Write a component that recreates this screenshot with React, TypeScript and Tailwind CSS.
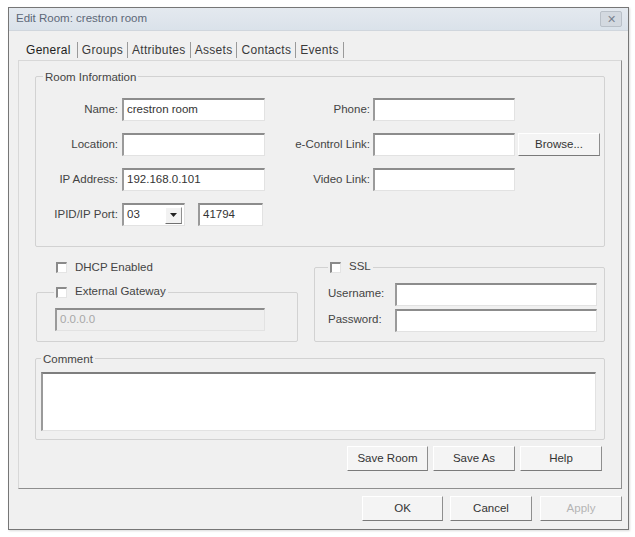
import React from 'react';

const font = { fontFamily: '"Liberation Sans", Arial, sans-serif' };

function Field({ width, value = '', disabled = false }: { width: string; value?: string; disabled?: boolean }) {
  return (
    <div
      className={`${width} h-[23px] flex items-center px-[3px] border-t-2 border-l-2 border-r border-b border-t-[#8c8c8c] border-l-[#9a9a9a] border-r-[#e2e2e2] border-b-[#e2e2e2] ${
        disabled ? 'bg-[#efefef] text-[#a8a8a8]' : 'bg-white text-[#333]'
      }`}
    >
      {value}
    </div>
  );
}

function Check() {
  return <span className="inline-block w-[11px] h-[11px] bg-white border-t-2 border-l-2 border-r border-b border-t-[#8a8a8a] border-l-[#8a8a8a] border-r-[#e4e4e4] border-b-[#e4e4e4]" />;
}

function Btn({ label, width, disabled = false, h = 'h-[25px]' }: { label: string; width: string; disabled?: boolean; h?: string }) {
  return (
    <div
      className={`${width} ${h} flex items-center justify-center bg-[#f4f4f4] border border-t-white border-l-white border-r-[#8e8e8e] border-b-[#7a7a7a] ${
        disabled ? 'text-[#b4b4b4]' : 'text-[#333]'
      }`}
    >
      {label}
    </div>
  );
}

export default function App() {
  const tabs = ['General', 'Groups', 'Attributes', 'Assets', 'Contacts', 'Events'];

  return (
    <div className="w-[635px] h-[537px] bg-white pt-[7px] pl-[8px] text-[11.5px] text-[#444]" style={font}>
      <div className="w-[621px] h-[523px] bg-[#f0f0f0] border border-[#767676] flex flex-col shadow-[1px_1px_2px_rgba(0,0,0,0.15)]">
        {/* title bar */}
        <div className="h-[23px] flex items-center justify-between pl-[7px] pr-[6px] bg-gradient-to-b from-[#e4e9ef] to-[#dae2ea] border-b border-[#d0d6dd]">
          <span className="text-[#5d6878] text-[11.5px]">Edit Room: crestron room</span>
          <div className="w-[22px] h-[16px] flex items-center justify-center bg-[#d3d9e0] border border-[#b9c0c8] rounded-[2px] text-[#7a8390] text-[11px] leading-none">
            ✕
          </div>
        </div>

        {/* tabs */}
        <div className="h-[29px] flex items-center pt-[9px] pl-[16px] text-[#3a3a3a] text-[12px] tracking-[0.3px]">
          {tabs.map((t, i) => (
            <div key={t} className="flex items-center">
              <span className={i === 0 ? 'text-[#1e1e1e] pl-[1px] pr-[6px]' : 'px-[4px]'}>{t}</span>
              <span className="inline-block w-px h-[16px] bg-[#9a9a9a]" />
            </div>
          ))}
        </div>

        {/* tab panel */}
        <div className="ml-[9px] w-[604px] h-[429px] border border-[#d8d8d8] border-r-[#8e8e8e] border-b-[#8e8e8e] flex flex-col">
          {/* Room information */}
          <div className="relative ml-[16px] mt-[15px] w-[570px] h-[171px] border border-[#d2d2d2] rounded-[2px] pt-[21px] flex flex-col gap-[12px]">
            <span className="absolute -top-[8px] left-[7px] px-[2px] bg-[#f0f0f0]">Room Information</span>

            <div className="flex items-center h-[23px]">
              <span className="w-[82px] text-right">Name:</span>
              <div className="ml-[4px]"><Field width="w-[143px]" value="crestron room" /></div>
              <span className="w-[105px] text-right">Phone:</span>
              <div className="ml-[3px]"><Field width="w-[142px]" /></div>
            </div>

            <div className="flex items-center h-[23px]">
              <span className="w-[82px] text-right">Location:</span>
              <div className="ml-[4px]"><Field width="w-[143px]" /></div>
              <span className="w-[105px] text-right">e-Control Link:</span>
              <div className="ml-[3px]"><Field width="w-[142px]" /></div>
              <div className="ml-[3px]"><Btn label="Browse..." width="w-[82px]" h="h-[23px]" /></div>
            </div>

            <div className="flex items-center h-[23px]">
              <span className="w-[82px] text-right">IP Address:</span>
              <div className="ml-[4px]"><Field width="w-[143px]" value="192.168.0.101" /></div>
              <span className="w-[105px] text-right">Video Link:</span>
              <div className="ml-[3px]"><Field width="w-[142px]" /></div>
            </div>

            <div className="flex items-center h-[23px]">
              <span className="w-[82px] text-right">IPID/IP Port:</span>
              <div className="ml-[4px] w-[63px] h-[23px] flex items-center justify-between pl-[3px] pr-[2px] bg-white border-t-2 border-l-2 border-r border-b border-t-[#8c8c8c] border-l-[#9a9a9a] border-r-[#e2e2e2] border-b-[#e2e2e2] text-[#333]">
                <span>03</span>
                <span className="w-[17px] h-[17px] flex items-center justify-center bg-[#f2f2f2] border border-t-white border-l-white border-r-[#909090] border-b-[#707070]">
                  <svg width="7" height="4" viewBox="0 0 7 4"><path d="M0 0h7L3.5 4z" fill="#222" /></svg>
                </span>
              </div>
              <div className="ml-[13px]"><Field width="w-[65px]" value="41794" /></div>
            </div>
          </div>

          {/* lower options */}
          <div className="flex ml-[16px]">
            <div className="w-[263px] flex flex-col">
              <div className="mt-[14px] h-[13px] flex items-center pl-[21px] gap-[8px]">
                <Check />
                <span>DHCP Enabled</span>
              </div>
              <div className="relative mt-[18px] ml-[1px] w-[262px] h-[50px] border border-[#d2d2d2] rounded-[2px] pt-[15px] pl-[18px]">
                <span className="absolute -top-[8px] left-[17px] px-[2px] bg-[#f0f0f0] flex items-center gap-[8px] h-[14px]">
                  <Check />
                  <span>External Gateway</span>
                </span>
                <Field width="w-[210px]" value="0.0.0.0" disabled />
              </div>
            </div>

            <div className="relative ml-[16px] mt-[20px] w-[291px] h-[75px] border border-[#d2d2d2] rounded-[2px] pt-[15px] pl-[13px] flex flex-col gap-[4px]">
              <span className="absolute -top-[8px] left-[13px] px-[2px] bg-[#f0f0f0] flex items-center gap-[8px] h-[14px]">
                <Check />
                <span>SSL</span>
              </span>
              <div className="flex items-center h-[22px]">
                <span className="w-[67px]">Username:</span>
                <Field width="w-[202px]" />
              </div>
              <div className="flex items-center h-[22px]">
                <span className="w-[67px]">Password:</span>
                <Field width="w-[202px]" />
              </div>
            </div>
          </div>

          {/* Comment */}
          <div className="relative ml-[16px] mt-[16px] w-[570px] h-[82px] border border-[#d2d2d2] rounded-[2px] pt-[13px] pl-[5px]">
            <span className="absolute -top-[8px] left-[5px] px-[2px] bg-[#f0f0f0]">Comment</span>
            <div className="w-[555px] h-[59px] bg-white border-t-2 border-l-2 border-r border-b border-t-[#7e7e7e] border-l-[#9a9a9a] border-r-[#e2e2e2] border-b-[#e2e2e2]" />
          </div>

          <div className="mt-[6px] flex justify-end pr-[19px] gap-[5px]">
            <Btn label="Save Room" width="w-[81px]" />
            <Btn label="Save As" width="w-[82px]" />
            <Btn label="Help" width="w-[82px]" />
          </div>
        </div>

        {/* dialog buttons */}
        <div className="mt-[7px] flex justify-end pr-[6px] gap-[7px]">
          <Btn label="OK" width="w-[81px]" />
          <Btn label="Cancel" width="w-[82px]" />
          <div className="ml-[1px]"><Btn label="Apply" width="w-[82px]" disabled /></div>
        </div>
      </div>
    </div>
  );
}
